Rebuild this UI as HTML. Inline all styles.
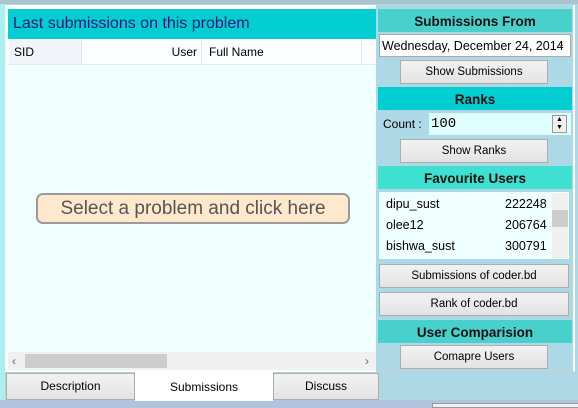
<!DOCTYPE html>
<html><head><style>
*{box-sizing:border-box;margin:0;padding:0}
body{width:578px;height:408px;overflow:hidden;background:#add8e6;font-family:"Liberation Sans",sans-serif;position:relative;font-size:12px;color:#000}
.a{position:absolute}
.btn{position:absolute;background:linear-gradient(#f2f2f2,#e3e3e3);border:1px solid #adadad;text-align:center;font-size:11.5px;line-height:23px}
.hd{position:absolute;left:378px;width:194px;text-align:center;font-size:13.5px;font-weight:bold;color:#111;line-height:25px;height:23px}
</style></head><body>
<div class="a" style="left:0;top:0;width:578px;height:4px;background:#a9c3cf"></div>
<div class="a" style="left:0;top:400px;width:578px;height:8px;background:#b0c4de"></div>
<div class="a" style="left:0;top:4px;width:5px;height:396px;background:#aeeeee"></div>
<div class="a" style="left:5px;top:5px;width:373px;height:367px;background:#fff"></div>
<div class="a" style="left:8px;top:9px;width:368px;height:30px;background:#00ced1;color:#1a1a7a;font-size:16px;line-height:30px;padding-left:5px">Last submissions on this problem</div>
<div class="a" style="left:8px;top:39px;width:368px;height:26px;background:#fcfdff;border-bottom:1px solid #dde8f0"></div>
<div class="a" style="left:9px;top:40px;width:73px;height:24px;background:#f1f5fa;border-right:1px solid #dde8f0;line-height:25px;padding-left:5px">SID</div>
<div class="a" style="left:82px;top:40px;width:120px;height:24px;border-right:1px solid #dde8f0;line-height:25px;text-align:right;padding-right:4px">User</div>
<div class="a" style="left:202px;top:40px;width:160px;height:24px;border-right:1px solid #dde8f0;line-height:25px;padding-left:7px">Full Name</div>
<div class="a" style="left:8px;top:65px;width:368px;height:287px;background:#f0ffff"></div>
<div class="a" style="left:36px;top:193px;width:314px;height:31px;background:#ffe8cc;border:2px solid #9a9a9a;border-radius:7px;color:#555;font-size:19px;line-height:28px;text-align:center">Select a problem and click here</div>
<div class="a" style="left:8px;top:352px;width:368px;height:18px;background:#f0f0f0;color:#666;font-size:12px;line-height:18px;padding-left:4px">&#8249;</div>
<div class="a" style="left:25px;top:354px;width:142px;height:14px;background:#cdcdcd"></div>
<div class="a" style="left:365px;top:352px;font-size:12px;line-height:18px;color:#666">&#8250;</div>
<div class="btn" style="left:6px;top:373px;width:129px;height:27px;line-height:25px;font-size:12px">Description</div>
<div class="a" style="left:135px;top:372px;width:138px;height:29px;background:#fff;text-align:center;line-height:30px;font-size:12px">Submissions</div>
<div class="btn" style="left:273px;top:373px;width:106px;height:27px;line-height:25px;font-size:12px">Discuss</div>
<div class="a" style="left:376px;top:5px;width:199px;height:367px;background:#add8e6;border-right:2px solid #fff;border-bottom:1px solid #ccc"></div>
<div class="hd" style="top:9px;background:#48d1cc">Submissions From</div>
<div class="a" style="left:379px;top:34px;width:192px;height:23px;background:#fff;border:1px solid #aaa;font-size:12.5px;line-height:22px;padding-left:2px;white-space:nowrap;overflow:hidden">Wednesday, December 24, 2014</div>
<div class="a" style="left:557px;top:35px;color:#555;font-size:10px;line-height:20px">&#8964;</div>
<div class="btn" style="left:400px;top:60px;width:148px;height:24px">Show Submissions</div>
<div class="hd" style="top:87px;background:#00ced1">Ranks</div>
<div class="a" style="left:383px;top:113px;line-height:23px">Count :</div>
<div class="a" style="left:429px;top:113px;width:142px;height:22px;background:#e0ffff;font-family:'Liberation Mono',monospace;font-size:14px;line-height:22px;padding-left:2px">100</div>
<div class="a" style="left:552px;top:115px;width:15px;height:18px;border:1px solid #999;background:#f0f0f0;font-size:7px;line-height:8px;text-align:center">▲<br>▼</div>
<div class="btn" style="left:400px;top:139px;width:148px;height:24px">Show Ranks</div>
<div class="hd" style="top:166px;background:#40e0d0">Favourite Users</div>
<div class="a" style="left:379px;top:192px;width:190px;height:67px;background:#f0ffff"></div>
<div class="a" style="left:386px;top:194px;line-height:21px;font-size:12.5px">dipu_sust<br>olee12<br>bishwa_sust</div>
<div class="a" style="left:505px;top:194px;line-height:21px;font-size:12.5px;text-align:right;width:40px">222248<br>206764<br>300791</div>
<div class="a" style="left:552px;top:193px;width:16px;height:65px;background:#f0f0f0"></div>
<div class="a" style="left:552px;top:210px;width:16px;height:17px;background:#cdcdcd"></div>
<div class="btn" style="left:379px;top:264px;width:190px;height:24px">Submissions of coder.bd</div>
<div class="btn" style="left:379px;top:292px;width:190px;height:24px">Rank of coder.bd</div>
<div class="hd" style="top:320px;background:#48d1cc">User Comparision</div>
<div class="btn" style="left:400px;top:345px;width:148px;height:24px">Comapre Users</div>
<div class="a" style="left:432px;top:403px;width:150px;height:5px;background:#f0f0f0;border:1px solid #999"></div>
</body></html>
